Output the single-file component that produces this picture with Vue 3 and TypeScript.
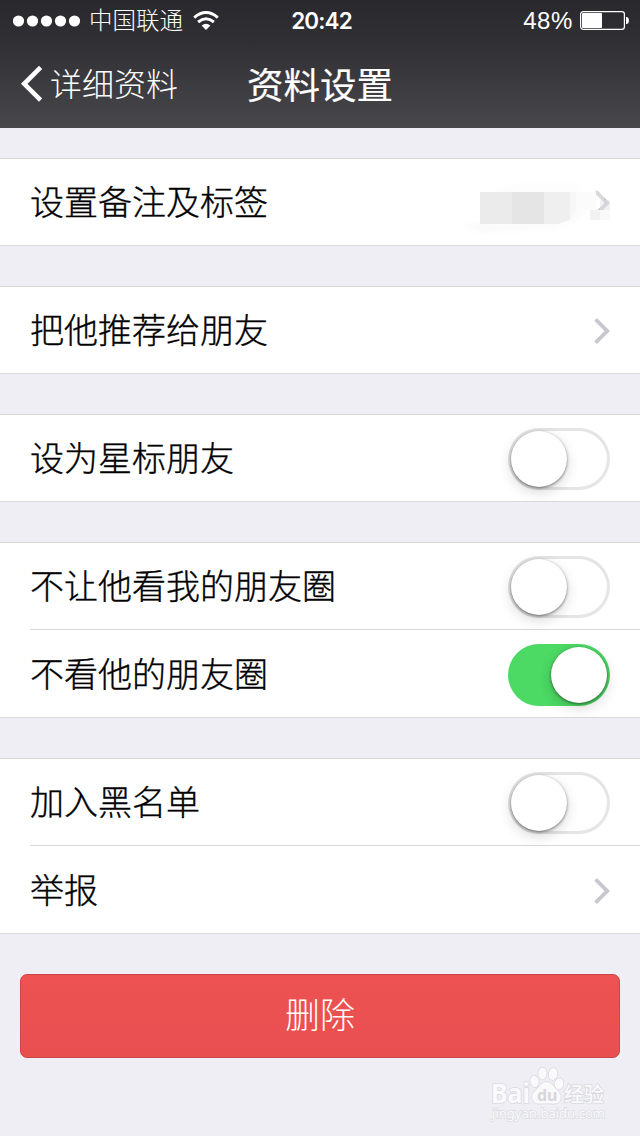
<script setup lang="ts">
interface Row {
  label: string
  kind: 'link' | 'switch'
  on?: boolean
  masked?: boolean
}

const groups: Row[][] = [
  [{ label: '设置备注及标签', kind: 'link', masked: true }],
  [{ label: '把他推荐给朋友', kind: 'link' }],
  [{ label: '设为星标朋友', kind: 'switch' }],
  [
    { label: '不让他看我的朋友圈', kind: 'switch' },
    { label: '不看他的朋友圈', kind: 'switch', on: true },
  ],
  [
    { label: '加入黑名单', kind: 'switch' },
    { label: '举报', kind: 'link' },
  ],
]
</script>

<template>
  <div class="screen">
    <header class="header">
      <div class="status">
        <div class="status-left">
          <svg class="signal" width="68" height="12" viewBox="0 0 68 12">
            <circle v-for="n in 5" :key="n" :cx="5.5 + (n - 1) * 14" cy="6" r="5.6" fill="#fff" />
          </svg>
          <span class="carrier">中国联通</span>
          <svg class="wifi" width="26" height="20" viewBox="0 0 26 20" fill="none" stroke="#fff" stroke-width="2.9">
            <path d="M1.2 6.6Q13 -3.4 24.8 6.6" />
            <path d="M5.1 11Q13 4.6 20.9 11" />
            <path d="M13 19L8.6 14.4Q13 11 17.4 14.4Z" fill="#fff" stroke="none" />
          </svg>
        </div>
        <span class="time">20:42</span>
        <div class="status-right">
          <span class="percent">48%</span>
          <svg class="battery" width="50" height="20" viewBox="0 0 50 20">
            <rect x="0.6" y="0.6" width="43.8" height="17.8" rx="2.6" fill="none" stroke="#fff" stroke-width="1.2" />
            <rect x="2" y="2" width="20" height="15" rx="0.8" fill="#fff" />
            <path d="M46 6h1q2 .6 2 3.5t-2 3.5h-1z" fill="#fff" />
          </svg>
        </div>
      </div>
      <nav class="nav">
        <div class="back">
          <svg width="22" height="36" viewBox="0 0 22 36" fill="none" stroke="#fff" stroke-width="4.6">
            <path d="M20.6 1.4L4.2 17.8L20.6 34.2" />
          </svg>
          <span>详细资料</span>
        </div>
        <h1 class="title">资料设置</h1>
      </nav>
    </header>

    <main class="content">
      <section v-for="(group, g) in groups" :key="g" class="group">
        <div v-for="row in group" :key="row.label" class="row">
          <span class="label">{{ row.label }}</span>
          <div v-if="row.kind === 'switch'" class="switch" :class="{ on: row.on }">
            <div class="knob"></div>
          </div>
          <svg v-else class="chevron" width="18" height="28" viewBox="0 0 18 28" fill="none" stroke="#c7c7cc" stroke-width="3.8">
            <path d="M3.6 2.400L15.200 14L3.600 25.600" />
          </svg>
          <svg v-if="row.masked" class="mask" width="160" height="60" viewBox="0 0 160 60">
            <defs>
              <filter id="soft" x="-20%" y="-60%" width="140%" height="220%">
                <feGaussianBlur stdDeviation="3" />
              </filter>
            </defs>
            <path d="M0 46H100L128 22L122 38L96 50L20 54Z" fill="#f9f9fb" filter="url(#soft)" />
            <path d="M22 14H120V6H60Z" fill="#fcfcfd" filter="url(#soft)" />
            <rect x="20" y="14" width="32" height="32" fill="#ebebeb" />
            <rect x="52" y="14" width="32" height="32" fill="#e5e5e5" />
            <path d="M84 14h26v28L98 46H84z" fill="#efefef" />
            <path d="M110 14h6v20l-6 6z" fill="#f7f7f7" />
            <rect x="116" y="14" width="20" height="18" fill="#fbfbfb" />
            <rect x="132" y="8" width="12" height="14" fill="#fff" opacity=".3" />
            <rect x="140" y="22" width="10" height="10" fill="#e3e3e8" opacity=".5" />
            <rect x="130" y="32" width="10" height="10" fill="#f2f2f3" />
            <rect x="140" y="32" width="10" height="10" fill="#f9f9fa" />
          </svg>
        </div>
      </section>

      <button class="delete">删除</button>
    </main>

    <div class="watermark">
      <svg width="130" height="66" viewBox="0 0 130 66">
        <g fill="#fafafc" stroke="#d9d9de" stroke-width="1.4" paint-order="stroke">
          <ellipse cx="50.500" cy="17.500" rx="4.200" ry="5.600" transform="rotate(-12 50.500 17.500)" />
          <ellipse cx="58.500" cy="9.500" rx="4.200" ry="6" />
          <ellipse cx="69" cy="10" rx="4.200" ry="6" transform="rotate(12 69 10)" />
          <ellipse cx="75" cy="20" rx="4.400" ry="5.600" transform="rotate(12 75 20)" />
          <path d="M62.500 18C57 18 55.500 23 51.500 26.500C48 30 47.500 33 49 36.500C51 41 57 39.500 62.500 39.500C68 39.500 74 41 76 36.500C77.500 33 77 30 73.500 26.500C69.500 23 68 18 62.500 18Z" />
        </g>
        <g class="wm-bold">
          <text x="7" y="38.500" font-size="26" textLength="39" lengthAdjust="spacingAndGlyphs">Bai</text>
          <text class="wm-cjk" x="80" y="38" font-size="20" textLength="40">经验</text>
        </g>
        <text class="wm-du" x="53" y="36.500" font-size="16">du</text>
        <text class="wm-url" x="8" y="53.500" font-size="13" textLength="113">jingyan.baidu.com</text>
      </svg>
    </div>
  </div>
</template>

<style>
html,
body {
  margin: 0;
  background: #efeef4;
}
</style>

<style scoped>
.screen {
  position: relative;
  width: 640px;
  height: 1136px;
  overflow: hidden;
  background: #efeef4;
  font-family: "Liberation Sans", "Noto Sans CJK SC", sans-serif;
  color: #000;
}

.header {
  height: 128px;
  color: #fff;
  background: linear-gradient(#29282d 0%, #313035 35%, #48474a 100%);
}

.status,
.nav {
  display: grid;
  grid-template-columns: 1fr auto 1fr;
  align-items: center;
}

.status {
  height: 40px;
  padding: 1px 10px 0 13px;
  box-sizing: border-box;
  font-size: 24px;
  line-height: 39px;
}

.status-left,
.status-right {
  display: flex;
  align-items: center;
}

.carrier {
  margin-left: 8px;
  padding-top: 2px;
  font-size: 23.5px;
  line-height: 37px;
  font-weight: 300;
}

.wifi {
  margin-left: 10px;
}

.time {
  font-family: Inter, "Liberation Sans", sans-serif;
  font-weight: 600;
  font-size: 22.5px;
  letter-spacing: -0.9px;
}

.status-right {
  justify-content: flex-end;
}

.percent {
  font-family: "Liberation Sans", sans-serif;
  font-weight: 400;
  letter-spacing: 0.6px;
}

.battery {
  margin-left: 7px;
}

.nav {
  height: 84px;
  padding: 0 20px;
}

.back {
  display: flex;
  align-items: center;
  gap: 8px;
  font-size: 32px;
  font-weight: 300;
}

.back svg {
  margin-top: 4px;
}

.title {
  margin: 2px 0 0;
  font-size: 36.5px;
  font-weight: 400;
  -webkit-text-stroke: 0.2px #fff;
}

.content {
  display: flex;
  flex-direction: column;
  gap: 40px;
  padding-top: 30px;
}

.group {
  background: #fff;
  box-shadow: inset 0 1px #d9d9db, inset 0 -1px #d9d9db;
}

.row {
  position: relative;
  box-sizing: border-box;
  display: flex;
  align-items: center;
  justify-content: space-between;
  height: 88px;
  padding: 2px 30px 0;
}

.row:not(:last-child) {
  background: linear-gradient(#d9d9db, #d9d9db) 30px 100% / 100% 1px no-repeat;
}

.label {
  font-size: 34px;
  line-height: 48px;
  font-weight: 300;
  -webkit-text-stroke: 0.35px #000;
}

.switch {
  box-sizing: border-box;
  width: 102px;
  height: 62px;
  padding: 3px;
  display: flex;
  border-radius: 31px;
  box-shadow: inset 0 0 0 3px #e5e5e5;
}

.switch.on {
  justify-content: flex-end;
  background: #4cd964;
  box-shadow: none;
}

.knob {
  width: 56px;
  height: 56px;
  border-radius: 50%;
  background: #fff;
  box-shadow: 0 1px 3px rgba(0, 0, 0, 0.5), 0 5px 14px rgba(0, 0, 0, 0.16);
}

.mask {
  position: absolute;
  left: 460px;
  top: 20px;
}

.delete {
  box-sizing: border-box;
  height: 84px;
  margin: 0 20px;
  padding: 0;
  border: 1px solid #cc4549;
  border-radius: 7px;
  background: linear-gradient(#ee5253, #e84f4f);
  color: #fff;
  font: 300 35px/82px "Liberation Sans", "Noto Sans CJK SC", sans-serif;
}

.watermark {
  position: absolute;
  left: 484px;
  top: 1064px;
}

.watermark text {
  font-family: "Noto Sans", "Noto Sans CJK SC", sans-serif;
}

.wm-bold {
  font-weight: 700;
  fill: #fafafc;
  stroke: #d9d9de;
  stroke-width: 1.6px;
  paint-order: stroke;
}

.wm-cjk {
  font-weight: 500;
}

.wm-du {
  font-weight: 700;
  fill: #d6d6db;
}

.wm-url {
  fill: #fafafc;
  stroke: #dcdce1;
  stroke-width: 1.4px;
  paint-order: stroke;
}
</style>
